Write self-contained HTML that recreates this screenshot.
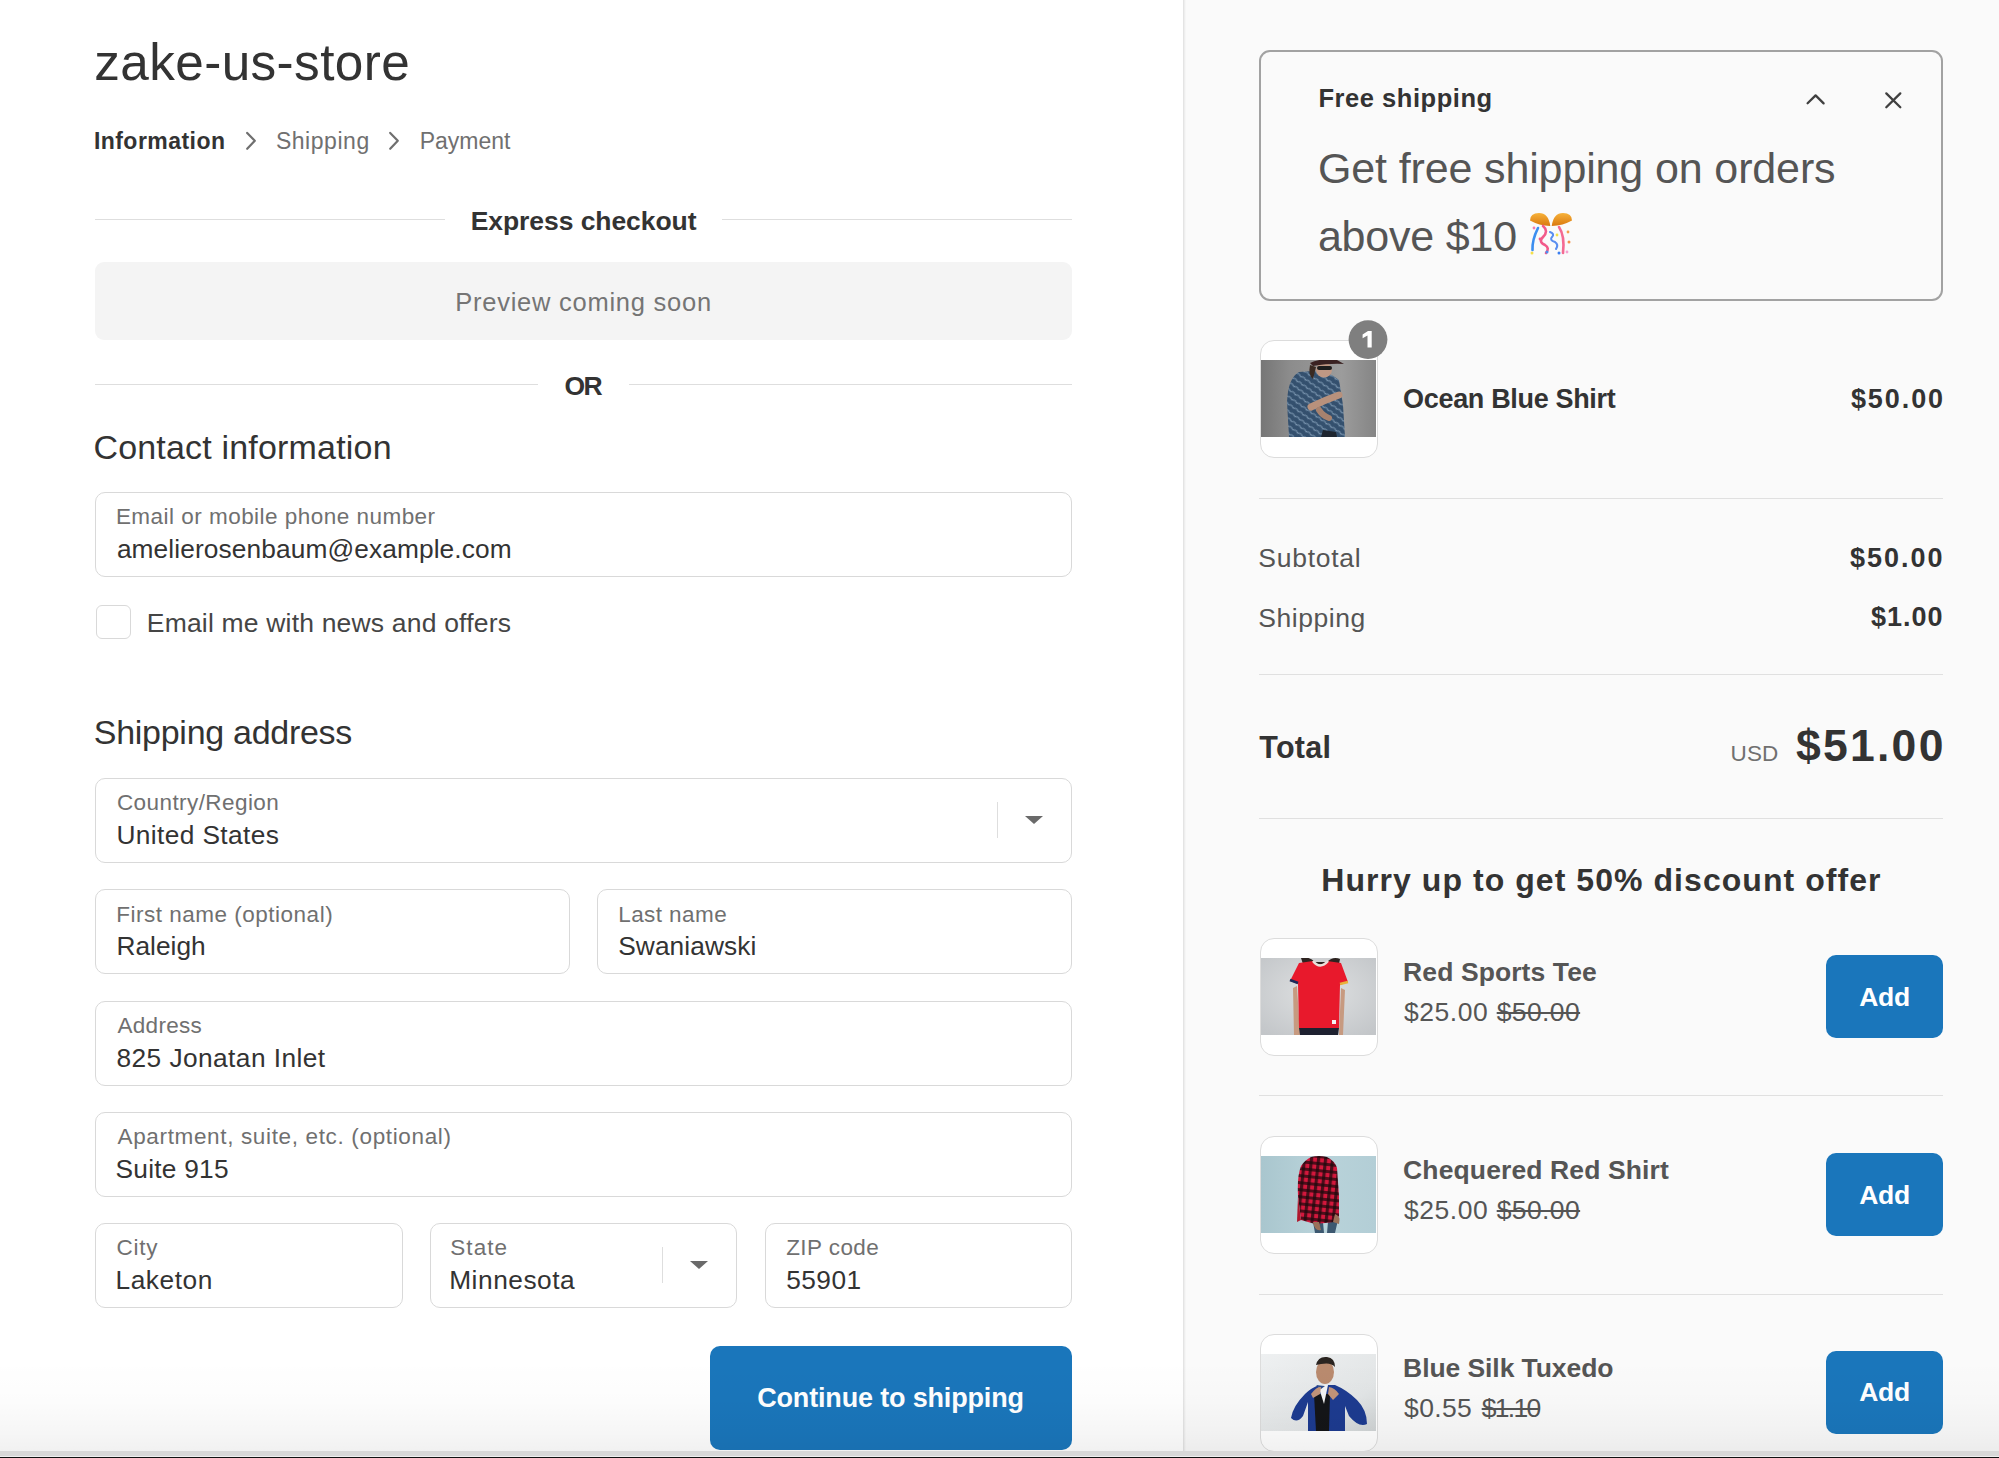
<!DOCTYPE html>
<html><head><meta charset="utf-8"><style>
html,body{margin:0;padding:0;}
body{width:1999px;height:1458px;position:relative;overflow:hidden;background:#fff;font-family:"Liberation Sans",sans-serif;}
.t{position:absolute;white-space:nowrap;}
.abs{position:absolute;box-sizing:border-box;}
.rp{position:absolute;left:1183px;top:0;width:816px;height:1458px;background:linear-gradient(to right,#e4e4e4 0,#e4e4e4 1px,#eeeeee 1px,#eeeeee 2px,#f6f6f6 2px,#f6f6f6 3px,#fafafa 3px);}
.hl{position:absolute;height:1px;background:#dedede;}
.fld{position:absolute;box-sizing:border-box;border:1px solid #d9d9d9;border-radius:10px;background:#fff;}
.sep{position:absolute;width:1px;background:#dedede;}
.arr{position:absolute;width:0;height:0;border-left:9px solid transparent;border-right:9px solid transparent;border-top:8.5px solid #6a6a6a;}
.btn{position:absolute;box-sizing:border-box;background:#1a76bb;border-radius:10px;}
.thumb{position:absolute;box-sizing:border-box;width:118px;height:118px;border:1px solid #dcdcdc;border-radius:14px;background:#fff;overflow:hidden;}
.thumb svg{position:absolute;left:0px;top:19px;}
.bottomfade{position:absolute;z-index:10;left:0;top:1360px;width:1999px;height:91px;background:linear-gradient(to bottom,rgba(0,0,0,0) 0%,rgba(0,0,0,0.012) 45%,rgba(0,0,0,0.035) 80%,rgba(0,0,0,0.055) 100%);}

</style></head><body>
<div class="rp"></div>
<!-- express lines -->
<div class="hl" style="left:95px;top:219px;width:350px;"></div>
<div class="hl" style="left:722px;top:219px;width:350px;"></div>
<div class="abs" style="left:94.5px;top:262px;width:977.5px;height:78px;background:#f4f4f4;border-radius:9px;"></div>
<div class="hl" style="left:95px;top:384px;width:443px;"></div>
<div class="hl" style="left:629px;top:384px;width:443px;"></div>
<!-- fields -->
<div class="fld" style="left:95px;top:492px;width:977px;height:85px;"></div>
<div class="fld" style="left:96px;top:605px;width:35px;height:34px;border-radius:6px;"></div>
<div class="fld" style="left:95px;top:778px;width:977px;height:85px;"></div>
<div class="sep" style="left:997px;top:802px;height:36px;"></div>
<div class="arr" style="left:1025px;top:816px;"></div>
<div class="fld" style="left:95px;top:889px;width:475px;height:85px;"></div>
<div class="fld" style="left:597px;top:889px;width:475px;height:85px;"></div>
<div class="fld" style="left:95px;top:1001px;width:977px;height:85px;"></div>
<div class="fld" style="left:95px;top:1112px;width:977px;height:85px;"></div>
<div class="fld" style="left:95px;top:1223px;width:308px;height:85px;"></div>
<div class="fld" style="left:430px;top:1223px;width:307px;height:85px;"></div>
<div class="sep" style="left:662px;top:1247px;height:36px;"></div>
<div class="arr" style="left:690px;top:1261px;"></div>
<div class="fld" style="left:765px;top:1223px;width:307px;height:85px;"></div>
<div class="btn" style="left:710px;top:1346px;width:362px;height:104px;"></div>

<!-- right panel -->
<div class="abs" style="left:1259px;top:50px;width:684px;height:251px;border:2px solid #a2a2a2;border-radius:11px;"></div>
<svg class="abs" style="left:1800px;top:86px;" width="32" height="28" viewBox="0 0 32 28"><path d="M7.6 17.2 L15.6 9.4 L23.6 17.4" fill="none" stroke="#404040" stroke-width="2.3" stroke-linecap="round" stroke-linejoin="round"/></svg>
<svg class="abs" style="left:1878px;top:86px;" width="30" height="30" viewBox="0 0 30 30"><path d="M8.3 7.4 L22.3 21.2 M22.3 7.4 L8.3 21.2" fill="none" stroke="#404040" stroke-width="2.3" stroke-linecap="round"/></svg>
<div class="hl" style="left:1259px;top:498px;width:684px;background:#e0e0e0;"></div>
<div class="hl" style="left:1259px;top:674px;width:684px;background:#e0e0e0;"></div>
<div class="hl" style="left:1259px;top:818px;width:684px;background:#e0e0e0;"></div>
<div class="hl" style="left:1259px;top:1095px;width:684px;background:#e0e0e0;"></div>
<div class="hl" style="left:1259px;top:1294px;width:684px;background:#e0e0e0;"></div>
<div class="btn" style="left:1826px;top:955px;width:117px;height:83px;"></div>
<div class="btn" style="left:1826px;top:1153px;width:117px;height:83px;"></div>
<div class="btn" style="left:1826px;top:1351px;width:117px;height:83px;"></div>

<div class="thumb" style="left:1260px;top:340px;"><svg width="115" height="77" viewBox="0 0 115 77"><defs><linearGradient id="og" x1="0" x2="1"><stop offset="0" stop-color="#767676"/><stop offset="0.25" stop-color="#8c8c8c"/><stop offset="0.7" stop-color="#9c9c9c"/><stop offset="1" stop-color="#858585"/></linearGradient>
<pattern id="op" width="6" height="6" patternUnits="userSpaceOnUse" patternTransform="rotate(35)"><rect width="6" height="6" fill="#34506e"/><path d="M0 3 Q3 0.5 6 3" stroke="#7f9ab4" stroke-width="1.1" fill="none"/></pattern></defs>
<rect width="115" height="77" fill="url(#og)"/>
<path d="M28 77 L26 42 Q27 18 38 12 L52 11 Q70 12 78 20 L82 45 L84 77 Z" fill="url(#op)"/>
<path d="M50 47 Q64 40 78 35" stroke="#b8917c" stroke-width="7" fill="none" stroke-linecap="round"/>
<path d="M58 50 Q62 56 68 58" stroke="#a8826e" stroke-width="6" fill="none" stroke-linecap="round"/>
<ellipse cx="63" cy="10" rx="8" ry="7.5" fill="#c09884"/>
<path d="M49 3 Q58 -2 76 0 L83 4 Q70 3 52 6 Z" fill="#3a2222"/>
<rect x="56" y="6" width="15" height="4" rx="2" fill="#1e1e1e"/>
<path d="M49 5 Q47 15 52 19 L55 7 Z" fill="#3a2a22"/>
<path d="M62 70 L75 72 L76 77 L60 77 Z" fill="#1f2630"/>
</svg></div>
<svg class="abs" style="left:1348px;top:320px;" width="40" height="40" viewBox="1348 320 40 40"><circle cx="1368" cy="339.6" r="19.4" fill="#7f7f7f"/><path d="M1367.5 347.6 L1371.7 347.6 L1371.7 330.9 L1368 330.9 L1362.6 334.5 L1362.6 338.3 L1367.5 335.4 Z" fill="#fff"/></svg>
<div class="thumb" style="left:1260px;top:938px;"><svg width="115" height="77" viewBox="0 0 115 77"><defs><radialGradient id="tg" cx="0.5" cy="0.45" r="0.7"><stop offset="0" stop-color="#dfe1e2"/><stop offset="1" stop-color="#c3c6c9"/></radialGradient></defs>
<rect width="115" height="77" fill="url(#tg)"/>
<path d="M33 77 L32 30 L36 28 L39 77 Z M78 77 L80 30 L84 32 L82 77 Z" fill="#c79a80"/>
<path d="M40 0 Q48 -2 54 4 L66 4 Q72 -2 79 1 L78 6 L42 6 Z" fill="#2d2320"/>
<path d="M38 5 L52 3 Q59 10 66 3 L80 5 L87 24 L79 27 L78 70 L38 70 L37 26 L29 23 Z" fill="#e8192c"/>
<path d="M52 3 Q59 12 67 3" stroke="#e9e0da" stroke-width="2.5" fill="none"/>
<path d="M29 22 L37 25" stroke="#1c2a5a" stroke-width="2.5"/>
<path d="M79 26 L87 24" stroke="#e9b13a" stroke-width="2.5"/>
<rect x="71" y="62" width="4" height="4" fill="#f4f4f4"/>
<path d="M38 70 L78 70 L77 77 L39 77 Z" fill="#1e2130"/>
</svg></div>
<div class="thumb" style="left:1260px;top:1136px;"><svg width="115" height="77" viewBox="0 0 115 77"><defs><linearGradient id="cg" x1="0" x2="1"><stop offset="0" stop-color="#a9c6ce"/><stop offset="0.5" stop-color="#b9d3da"/><stop offset="1" stop-color="#b3ced6"/></linearGradient>
<pattern id="pl" width="7" height="7" patternUnits="userSpaceOnUse" patternTransform="rotate(6)"><rect width="7" height="7" fill="#d3173c"/><rect width="3.2" height="7" fill="#2a0a12" opacity="0.8"/><rect width="7" height="3" fill="#1a080c" opacity="0.7"/></pattern></defs>
<rect width="115" height="77" fill="url(#cg)"/>
<path d="M54 77 L52 66 L62 66 L63 77 Z M66 77 L67 66 L77 64 L74 77 Z" fill="#3c5870"/>
<path d="M50 1 Q58 -1 66 1 Q74 5 76 12 L78 40 L78 60 L74 66 L54 68 L40 64 L37 40 Q36 20 40 10 Q44 4 50 1 Z" fill="url(#pl)"/>
<path d="M37 40 L40 64 L36 66 Z" fill="#b0182e"/>
<path d="M52 66 Q54 76 60 74 L58 66 Z M74 58 Q80 60 78 68 L72 66 Z" fill="#9a7058"/>
</svg></div>
<div class="thumb" style="left:1260px;top:1334px;"><svg width="115" height="77" viewBox="0 0 115 77"><defs><linearGradient id="xg" x1="0" x2="1" y1="0" y2="1"><stop offset="0" stop-color="#eef0f1"/><stop offset="0.7" stop-color="#e2e5e6"/><stop offset="1" stop-color="#cfd3d4"/></linearGradient></defs>
<rect width="115" height="77" fill="url(#xg)"/>
<path d="M47 77 L47 48 L42 62 Q36 70 30 64 Q32 52 44 40 Q50 34 58 31 L74 31 Q86 36 96 46 Q106 56 106 70 Q98 74 88 62 L84 52 L84 77 Z" fill="#1d3b90"/>
<path d="M53 40 L69 40 L68 77 L55 77 Z" fill="#141518"/>
<path d="M57 31 L67 31 L63 50 Z" fill="#f2f2f2"/>
<path d="M55 31 L64 32 L60 35 Z" fill="#2a4a8a"/>
<ellipse cx="64" cy="18" rx="9" ry="12" fill="#b98a6e"/>
<path d="M55 11 Q57 2 66 3 Q74 4 74 13 Q70 8 60 10 Z" fill="#2a2420"/>
<path d="M50 40 Q56 32 60 33 L59 40 L52 44 Z M68 33 Q74 34 78 40 L72 46 L67 40 Z" fill="#c19379"/>
</svg></div>

<div class="bottomfade"></div>
<div class="abs" style="z-index:11;left:0;top:1451px;width:1999px;height:4.5px;background:#d8d8d8;"></div>
<div class="abs" style="z-index:11;left:0;top:1455.5px;width:1999px;height:1.5px;background:#f0f0f0;"></div>
<div class="abs" style="z-index:11;left:0;top:1457px;width:1999px;height:1px;background:#111;"></div>
<svg class="abs" style="left:236px;top:122px;" width="30" height="38" viewBox="0 0 30 38"><path d="M11.2 10.9 L18.8 18.8 L11.2 26.8" fill="none" stroke="#6f6f6f" stroke-width="2.2" stroke-linecap="round" stroke-linejoin="round"/></svg>
<svg class="abs" style="left:379px;top:122px;" width="30" height="38" viewBox="0 0 30 38"><path d="M11.2 10.9 L18.8 18.8 L11.2 26.8" fill="none" stroke="#6f6f6f" stroke-width="2.2" stroke-linecap="round" stroke-linejoin="round"/></svg>
<svg class="abs" style="left:1529px;top:212px;" width="44" height="44" viewBox="0 0 44 44">
<defs><linearGradient id="eg" x1="0" y1="0" x2="0" y2="1"><stop offset="0" stop-color="#f7b23a"/><stop offset="1" stop-color="#d9780e"/></linearGradient></defs>
<path d="M1 8.5 Q1 1 10 1 Q19.5 1 21.3 14 Q10 13.5 1 8.5 Z" fill="url(#eg)"/>
<path d="M43 8.5 Q43 1 34 1 Q24.5 1 22.7 14 Q34 13.5 43 8.5 Z" fill="url(#eg)"/>
<path d="M9 16 Q3 28 3.5 38" stroke="#3b8ef0" stroke-width="2.6" fill="none" stroke-linecap="round"/>
<path d="M14 14 Q20 19 14 25 Q9 30 16 33 Q21 36 17 41" stroke="#f25a8a" stroke-width="2.6" fill="none" stroke-linecap="round"/>
<path d="M21 20 Q26 22 23 25 Q20 28 26 30 Q30 33 27 37" stroke="#5a8ef0" stroke-width="2.1" fill="none" stroke-linecap="round"/>
<path d="M30 15 Q36 24 34 41" stroke="#f46a92" stroke-width="2.6" fill="none" stroke-linecap="round"/>
<circle cx="5" cy="16" r="1.4" fill="#f47ab0"/><circle cx="3" cy="41" r="1.5" fill="#f4e04a"/><circle cx="18" cy="40" r="1.5" fill="#4a8ef0"/>
<circle cx="39" cy="20" r="1.4" fill="#f4a04a"/><circle cx="40" cy="30" r="1.5" fill="#f4904a"/><circle cx="38" cy="40" r="1.4" fill="#f4a0d0"/>
<circle cx="28" cy="23" r="1.4" fill="#f4e04a"/><circle cx="30" cy="41" r="1.5" fill="#3a7ef0"/><circle cx="11" cy="27" r="1.4" fill="#f25a8a"/>
</svg>

<div class="t" id="title" style="top:37.37px;font-size:51.3px;line-height:51.3px;font-weight:400;color:#333333;letter-spacing:0.401px;left:94.2px;">zake-us-store</div>
<div class="t" id="bc1" style="top:129.53px;font-size:23px;line-height:23px;font-weight:700;color:#333333;letter-spacing:0.460px;left:93.9px;">Information</div>
<div class="t" id="bc2" style="top:129.53px;font-size:23px;line-height:23px;font-weight:400;color:#707070;letter-spacing:0.544px;left:275.9px;">Shipping</div>
<div class="t" id="bc3" style="top:129.53px;font-size:23px;line-height:23px;font-weight:400;color:#707070;letter-spacing:0.000px;left:419.7px;">Payment</div>
<div class="t" id="express" style="top:208.07px;font-size:26.5px;line-height:26.5px;font-weight:700;color:#333333;letter-spacing:-0.067px;left:583.57px;transform:translateX(-50%);">Express checkout</div>
<div class="t" id="preview" style="top:290.21px;font-size:25.5px;line-height:25.5px;font-weight:400;color:#757575;letter-spacing:0.746px;left:583.56px;transform:translateX(-50%);">Preview coming soon</div>
<div class="t" id="or" style="top:373.07px;font-size:26.5px;line-height:26.5px;font-weight:700;color:#333333;letter-spacing:-1.800px;left:582.7px;transform:translateX(-50%);">OR</div>
<div class="t" id="contact" style="top:429.92px;font-size:34px;line-height:34px;font-weight:400;color:#333333;letter-spacing:0.189px;left:93.4px;">Contact information</div>
<div class="t" id="email_l" style="top:506.45px;font-size:22.5px;line-height:22.5px;font-weight:400;color:#707070;letter-spacing:0.474px;left:115.9px;">Email or mobile phone number</div>
<div class="t" id="email_v" style="top:535.54px;font-size:26.3px;line-height:26.3px;font-weight:400;color:#333333;letter-spacing:0.100px;left:116.9px;">amelierosenbaum@example.com</div>
<div class="t" id="news" style="top:609.87px;font-size:26.5px;line-height:26.5px;font-weight:400;color:#454545;letter-spacing:0.186px;left:146.8px;">Email me with news and offers</div>
<div class="t" id="ship" style="top:714.72px;font-size:34px;line-height:34px;font-weight:400;color:#333333;letter-spacing:-0.280px;left:93.8px;">Shipping address</div>
<div class="t" id="country_l" style="top:792.45px;font-size:22.5px;line-height:22.5px;font-weight:400;color:#707070;letter-spacing:0.431px;left:116.9px;">Country/Region</div>
<div class="t" id="country_v" style="top:821.74px;font-size:26.3px;line-height:26.3px;font-weight:400;color:#333333;letter-spacing:0.367px;left:116.5px;">United States</div>
<div class="t" id="fname_l" style="top:903.95px;font-size:22.5px;line-height:22.5px;font-weight:400;color:#707070;letter-spacing:0.500px;left:116.3px;">First name (optional)</div>
<div class="t" id="fname_v" style="top:933.24px;font-size:26.3px;line-height:26.3px;font-weight:400;color:#333333;letter-spacing:-0.000px;left:116.5px;">Raleigh</div>
<div class="t" id="lname_l" style="top:903.95px;font-size:22.5px;line-height:22.5px;font-weight:400;color:#707070;letter-spacing:0.427px;left:618.2px;">Last name</div>
<div class="t" id="lname_v" style="top:933.24px;font-size:26.3px;line-height:26.3px;font-weight:400;color:#333333;letter-spacing:0.088px;left:618.2px;">Swaniawski</div>
<div class="t" id="addr_l" style="top:1015.45px;font-size:22.5px;line-height:22.5px;font-weight:400;color:#707070;letter-spacing:0.300px;left:117.5px;">Address</div>
<div class="t" id="addr_v" style="top:1044.74px;font-size:26.3px;line-height:26.3px;font-weight:400;color:#333333;letter-spacing:0.425px;left:116.5px;">825 Jonatan Inlet</div>
<div class="t" id="apt_l" style="top:1126.45px;font-size:22.5px;line-height:22.5px;font-weight:400;color:#707070;letter-spacing:0.651px;left:117.5px;">Apartment, suite, etc. (optional)</div>
<div class="t" id="apt_v" style="top:1155.74px;font-size:26.3px;line-height:26.3px;font-weight:400;color:#333333;letter-spacing:0.250px;left:115.5px;">Suite 915</div>
<div class="t" id="city_l" style="top:1237.45px;font-size:22.5px;line-height:22.5px;font-weight:400;color:#707070;letter-spacing:0.734px;left:116.5px;">City</div>
<div class="t" id="city_v" style="top:1266.74px;font-size:26.3px;line-height:26.3px;font-weight:400;color:#333333;letter-spacing:0.534px;left:115.5px;">Laketon</div>
<div class="t" id="state_l" style="top:1237.45px;font-size:22.5px;line-height:22.5px;font-weight:400;color:#707070;letter-spacing:1.100px;left:450.2px;">State</div>
<div class="t" id="state_v" style="top:1266.74px;font-size:26.3px;line-height:26.3px;font-weight:400;color:#333333;letter-spacing:0.527px;left:449.2px;">Minnesota</div>
<div class="t" id="zip_l" style="top:1237.45px;font-size:22.5px;line-height:22.5px;font-weight:400;color:#707070;letter-spacing:0.428px;left:786.2px;">ZIP code</div>
<div class="t" id="zip_v" style="top:1266.74px;font-size:26.3px;line-height:26.3px;font-weight:400;color:#333333;letter-spacing:0.450px;left:786.2px;">55901</div>
<div class="t" id="cont" style="top:1385.14px;font-size:27px;line-height:27px;font-weight:700;color:#ffffff;letter-spacing:-0.169px;left:890.51px;transform:translateX(-50%);">Continue to shipping</div>
<div class="t" id="fs_t" style="top:86.41px;font-size:25.5px;line-height:25.5px;font-weight:700;color:#333333;letter-spacing:0.550px;left:1318.4px;">Free shipping</div>
<div class="t" id="fs_1" style="top:147.10px;font-size:43px;line-height:43px;font-weight:400;color:#555555;letter-spacing:-0.130px;left:1317.9px;">Get free shipping on orders</div>
<div class="t" id="fs_2" style="top:214.60px;font-size:43px;line-height:43px;font-weight:400;color:#555555;letter-spacing:-0.198px;left:1317.9px;">above $10</div>
<div class="t" id="ocean" style="top:385.84px;font-size:27px;line-height:27px;font-weight:700;color:#333333;letter-spacing:-0.333px;left:1403.1px;">Ocean Blue Shirt</div>
<div class="t" id="ocean_p" style="top:385.84px;font-size:27px;line-height:27px;font-weight:700;color:#333333;letter-spacing:1.920px;right:53.98000000000002px;">$50.00</div>
<div class="t" id="sub" style="top:545.17px;font-size:26.5px;line-height:26.5px;font-weight:400;color:#555555;letter-spacing:0.742px;left:1258.3px;">Subtotal</div>
<div class="t" id="sub_p" style="top:544.74px;font-size:27px;line-height:27px;font-weight:700;color:#333333;letter-spacing:2.000px;right:54.5px;">$50.00</div>
<div class="t" id="shp" style="top:604.77px;font-size:26.5px;line-height:26.5px;font-weight:400;color:#555555;letter-spacing:0.543px;left:1258.3px;">Shipping</div>
<div class="t" id="shp_p" style="top:604.34px;font-size:27px;line-height:27px;font-weight:700;color:#333333;letter-spacing:1.000px;right:55.5px;">$1.00</div>
<div class="t" id="total" style="top:731.58px;font-size:30.5px;line-height:30.5px;font-weight:700;color:#333333;letter-spacing:0.250px;left:1259.3px;">Total</div>
<div class="t" id="usd" style="top:742.95px;font-size:22.5px;line-height:22.5px;font-weight:400;color:#707070;letter-spacing:0.100px;right:220.5999999999999px;">USD</div>
<div class="t" id="total_p" style="top:724.33px;font-size:44.5px;line-height:44.5px;font-weight:700;color:#333333;letter-spacing:2.280px;right:53.319999999999936px;">$51.00</div>
<div class="t" id="hurry" style="top:864.21px;font-size:32px;line-height:32px;font-weight:700;color:#333333;letter-spacing:1.054px;left:1601.43px;transform:translateX(-50%);">Hurry up to get 50% discount offer</div>
<div class="t" id="red_n" style="top:959.17px;font-size:26.5px;line-height:26.5px;font-weight:700;color:#555555;letter-spacing:0.092px;left:1403.1px;">Red Sports Tee</div>
<div class="t" id="red_p" style="top:999.07px;font-size:26.5px;line-height:26.5px;font-weight:400;color:#555555;letter-spacing:0.520px;left:1404.1px;">$25.00</div>
<div class="t" id="red_o" style="top:999.07px;font-size:26.5px;line-height:26.5px;font-weight:400;color:#555555;letter-spacing:0.400px;text-decoration:line-through;left:1496.7px;">$50.00</div>
<div class="t" id="red_a" style="top:983.87px;font-size:26.5px;line-height:26.5px;font-weight:700;color:#ffffff;letter-spacing:-0.200px;left:1884.6px;transform:translateX(-50%);">Add</div>
<div class="t" id="chq_n" style="top:1156.97px;font-size:26.5px;line-height:26.5px;font-weight:700;color:#555555;letter-spacing:0.122px;left:1403.1px;">Chequered Red Shirt</div>
<div class="t" id="chq_p" style="top:1196.87px;font-size:26.5px;line-height:26.5px;font-weight:400;color:#555555;letter-spacing:0.520px;left:1404.1px;">$25.00</div>
<div class="t" id="chq_o" style="top:1196.87px;font-size:26.5px;line-height:26.5px;font-weight:400;color:#555555;letter-spacing:0.400px;text-decoration:line-through;left:1496.7px;">$50.00</div>
<div class="t" id="chq_a" style="top:1181.67px;font-size:26.5px;line-height:26.5px;font-weight:700;color:#ffffff;letter-spacing:-0.200px;left:1884.6px;transform:translateX(-50%);">Add</div>
<div class="t" id="tux_n" style="top:1354.77px;font-size:26.5px;line-height:26.5px;font-weight:700;color:#555555;letter-spacing:-0.080px;left:1403.1px;">Blue Silk Tuxedo</div>
<div class="t" id="tux_p" style="top:1394.67px;font-size:26.5px;line-height:26.5px;font-weight:400;color:#555555;letter-spacing:0.350px;left:1404.1px;">$0.55</div>
<div class="t" id="tux_o" style="top:1394.67px;font-size:26.5px;line-height:26.5px;font-weight:400;color:#555555;letter-spacing:-1.700px;text-decoration:line-through;left:1481.7px;">$1.10</div>
<div class="t" id="tux_a" style="top:1379.47px;font-size:26.5px;line-height:26.5px;font-weight:700;color:#ffffff;letter-spacing:-0.200px;left:1884.6px;transform:translateX(-50%);">Add</div>
</body></html>
